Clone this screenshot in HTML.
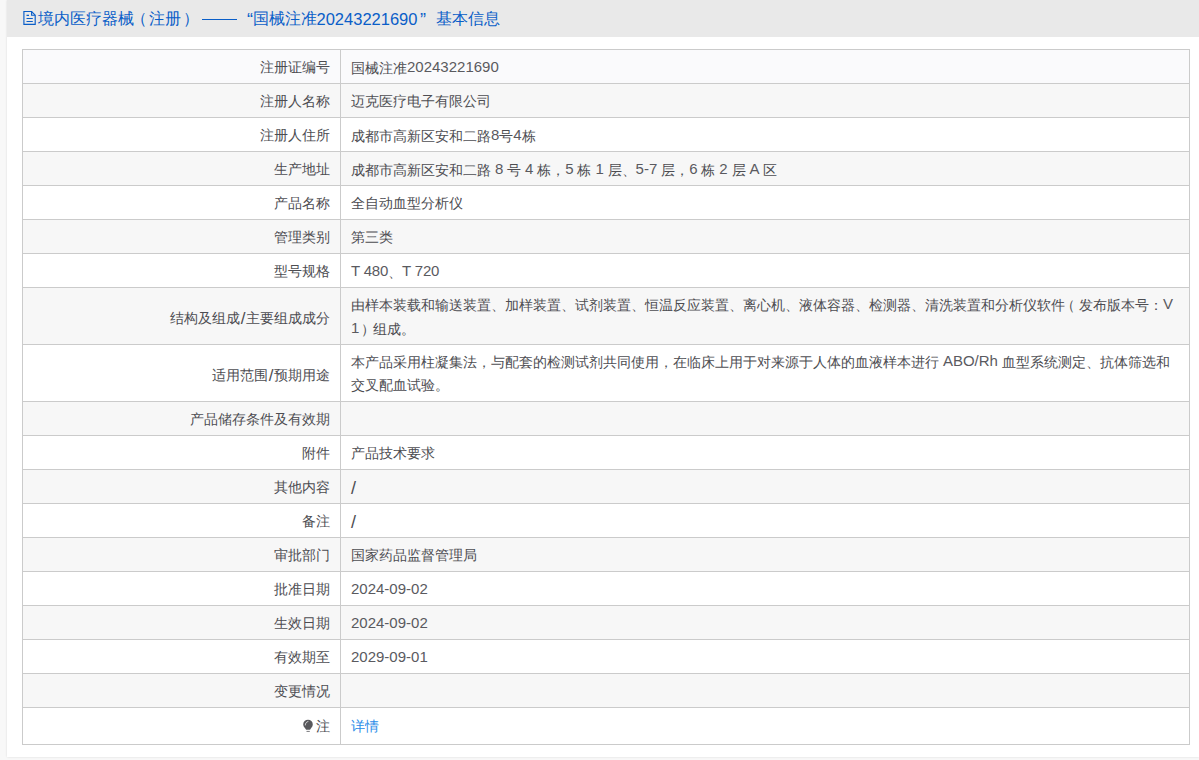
<!DOCTYPE html>
<html><head><meta charset="utf-8">
<style>
html,body{margin:0;padding:0}
body{width:1199px;height:760px;overflow:hidden;background:#f8f8f8;position:relative;font-family:"Liberation Sans",sans-serif;}
.panel{position:absolute;left:7px;top:0;width:1192px;height:757px;background:#fff;box-shadow:0 0 2px rgba(0,0,0,.12);}
.hd{position:absolute;left:7px;top:0;width:1192px;height:37px;background:#e9e9e9;}
.ttl{position:absolute;top:7px;font-size:16px;line-height:24px;color:#0a5ec8;white-space:nowrap;}
.dash{position:absolute;left:202px;top:18.5px;width:35px;height:1.3px;background:#0a5ec8}
.ico{position:absolute;left:22px;top:10px;}
.r{position:absolute;left:22px;width:1168px;box-sizing:border-box;border:1px solid #cbcbcb;border-bottom:none;background:#fff;}
.r.g{background:#f7f7f7}
.r.h{background:#fafafc}
.bt{position:absolute;left:22px;width:1168px;height:1px;background:#cbcbcb;top:744px}
.lb{position:absolute;left:0;top:0;width:318px;height:100%;border-right:1px solid #cbcbcb;box-sizing:border-box;text-align:right;padding:6px 10px 0 0;}
.ct{position:absolute;left:328px;top:0;padding:6px 0 0 0;}
.lb,.ct{font-size:14px;line-height:23px;color:#4d4d52;white-space:nowrap;}
.n{font-size:15px;position:relative;top:-1px;color:#5a5a5f}
.sl{font-size:17px;position:relative;top:0.5px;margin:0 0.6px}
a{color:#2a8ce8;text-decoration:none}
.bulb{vertical-align:-1px;margin-right:2px}
</style></head><body>
<div class="panel"></div>
<div class="hd"></div>
<svg class="ico" width="14" height="16" viewBox="0 0 14 16"><path d="M1.9 1.5 H9.6 L13.2 5.2 V14.3 H1.9 Z" fill="none" stroke="#0a5ec8" stroke-width="1.15" stroke-linejoin="miter"/><path d="M9.6 1.5 V5.2 H13.2" fill="none" stroke="#0a5ec8" stroke-width="1.1"/><path d="M4.5 5.4 H7 M4.5 8.5 H10.8 M4.5 11.5 H10.8" stroke="#0a5ec8" stroke-width="1.1"/></svg>
<div class="ttl" style="left:38px">境内医疗器械</div><div class="ttl" style="left:131px">（</div><div class="ttl" style="left:149px">注册</div><div class="ttl" style="left:183px">）</div><div class="dash"></div><div class="ttl" style="left:247px;font-size:18px;top:7.5px">“</div><div class="ttl" style="left:253px">国械注准</div><div class="ttl" style="left:316.5px;font-size:16.5px;top:6.5px">20243221690</div><div class="ttl" style="left:420px;font-size:18px;top:7.5px">”</div><div class="ttl" style="left:436px">基本信息</div>
<div class="r h" style="top:49px;height:34px"><div class=lb>注册证编号</div><div class=ct>国械注准<span class=n>20243221690</span></div></div>
<div class="r g" style="top:83px;height:34px"><div class=lb>注册人名称</div><div class=ct>迈克医疗电子有限公司</div></div>
<div class="r" style="top:117px;height:34px"><div class=lb>注册人住所</div><div class=ct>成都市高新区安和二路<span class=n>8</span>号<span class=n>4</span>栋</div></div>
<div class="r g" style="top:151px;height:34px"><div class=lb>生产地址</div><div class=ct>成都市高新区安和二路 <span class=n>8</span> 号 <span class=n>4</span> 栋，<span class=n>5</span> 栋 <span class=n>1</span> 层、<span class=n>5-7</span> 层，<span class=n>6</span> 栋 <span class=n>2</span> 层 <span class=n>A</span> 区</div></div>
<div class="r" style="top:185px;height:34px"><div class=lb>产品名称</div><div class=ct>全自动血型分析仪</div></div>
<div class="r g" style="top:219px;height:34px"><div class=lb>管理类别</div><div class=ct>第三类</div></div>
<div class="r" style="top:253px;height:34px"><div class=lb>型号规格</div><div class=ct><span class=n style="letter-spacing:-0.2px">T 480</span>、<span class=n style="letter-spacing:-0.2px">T 720</span></div></div>
<div class="r g" style="top:287px;height:57px"><div class=lb style="padding-top:18px">结构及组成<span class=sl>/</span>主要组成成分</div><div class=ct style="padding-top:5px">由样本装载和输送装置、加样装置、试剂装置、恒温反应装置、离心机、液体容器、检测器、清洗装置和分析仪软件<span style="position:relative;left:-4px">（</span>发布版本号：<span class=n>V</span><br><span class=n>1</span><span style="position:relative;left:2px">）</span>组成。</div></div>
<div class="r" style="top:344px;height:57px"><div class=lb style="padding-top:18px">适用范围<span class=sl>/</span>预期用途</div><div class=ct style="padding-top:5px">本产品采用柱凝集法，与配套的检测试剂共同使用，在临床上用于对来源于人体的血液样本进行 <span class=n>ABO/Rh</span> 血型系统测定、抗体筛选和<br>交叉配血试验。</div></div>
<div class="r g" style="top:401px;height:34px"><div class=lb>产品储存条件及有效期</div><div class=ct></div></div>
<div class="r" style="top:435px;height:34px"><div class=lb>附件</div><div class=ct>产品技术要求</div></div>
<div class="r g" style="top:469px;height:34px"><div class=lb>其他内容</div><div class=ct><span class=sl style="margin:0;font-size:18px;top:1px">/</span></div></div>
<div class="r" style="top:503px;height:34px"><div class=lb>备注</div><div class=ct><span class=sl style="margin:0;font-size:18px;top:1px">/</span></div></div>
<div class="r g" style="top:537px;height:34px"><div class=lb>审批部门</div><div class=ct>国家药品监督管理局</div></div>
<div class="r" style="top:571px;height:34px"><div class=lb>批准日期</div><div class=ct><span class=n>2024-09-02</span></div></div>
<div class="r g" style="top:605px;height:34px"><div class=lb>生效日期</div><div class=ct><span class=n>2024-09-02</span></div></div>
<div class="r" style="top:639px;height:34px"><div class=lb>有效期至</div><div class=ct><span class=n>2029-09-01</span></div></div>
<div class="r g" style="top:673px;height:34px"><div class=lb>变更情况</div><div class=ct></div></div>
<div class="r" style="top:707px;height:37px"><div class=lb style="padding-top:7px">注</div><div class=ct style="padding-top:7px"><a>详情</a></div></div>
<div class="bt"></div>
<svg style="position:absolute;left:302px;top:718px" width="12" height="15" viewBox="0 0 12 15"><path d="M4.1 11.8 C3.7 10.3 1.2 9.2 1.2 6.5 A4.8 4.8 0 1 1 10.8 6.5 C10.8 9.2 8.5 10.3 8.1 11.8 Z" fill="#58585c"/><path d="M3.3 7 C3.3 5.3 4.3 3.9 6 3.5" fill="none" stroke="#dcdcdc" stroke-width="0.9" stroke-linecap="round"/><path d="M4.5 13.4 H7.8" stroke="#6a6a6e" stroke-width="0.9"/></svg>
</body></html>
